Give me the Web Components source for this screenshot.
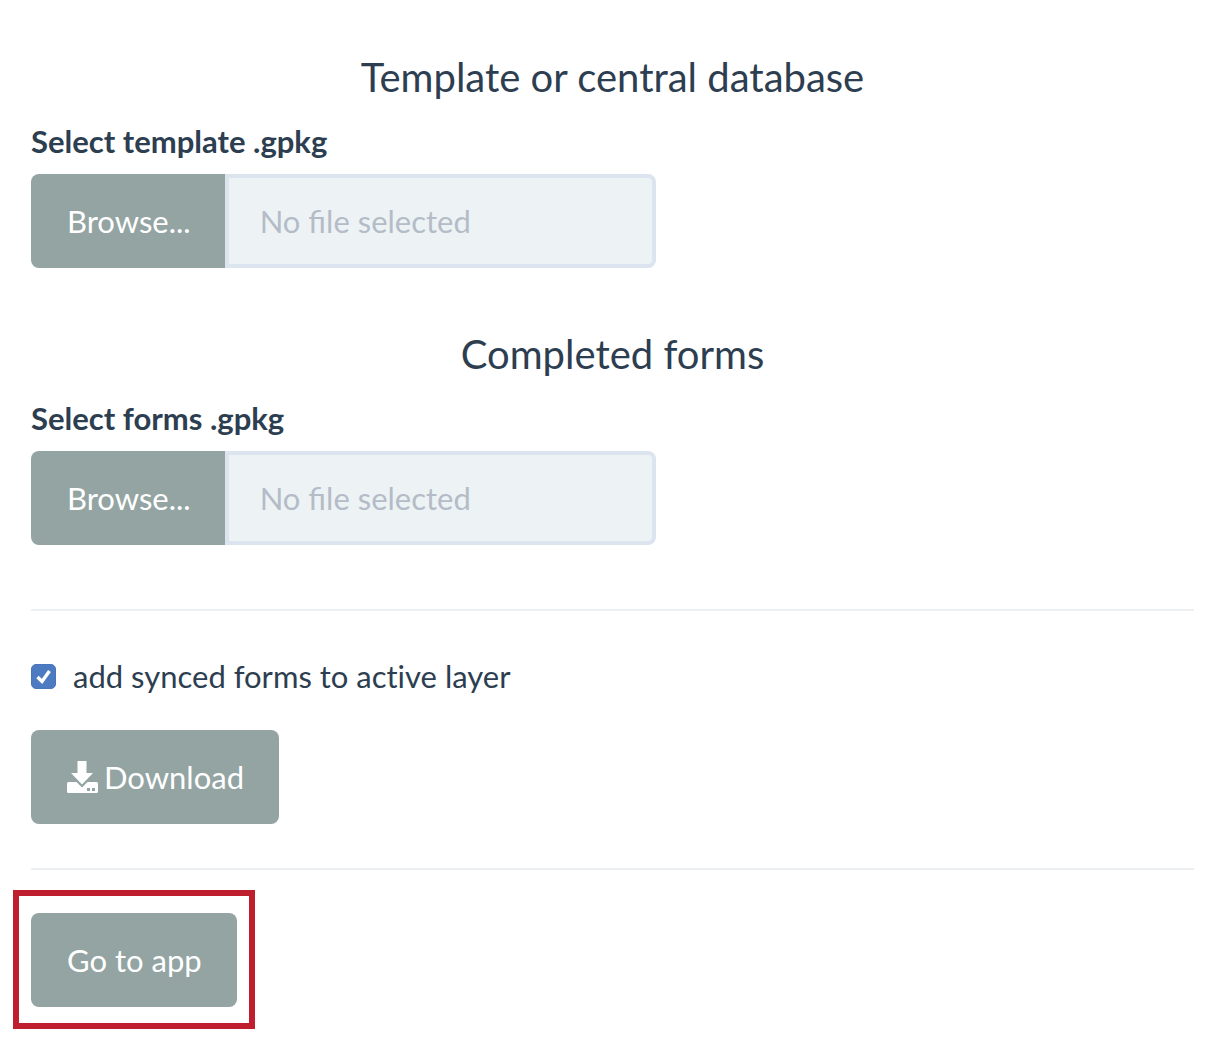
<!DOCTYPE html>
<html lang="en">
<head>
<meta charset="utf-8">
<meta name="viewport" content="width=device-width, initial-scale=1">
<title>Sync forms</title>
<style>
  body { margin: 0; background: #fff; color: #2c3e50; font: 31px/42px Lato, "Liberation Sans", sans-serif; }
</style>
</head>
<body>
<sync-page>
  <form-section heading="Template or central database">
    <file-picker label="Select template .gpkg"></file-picker>
  </form-section>
  <form-section heading="Completed forms">
    <file-picker label="Select forms .gpkg"></file-picker>
  </form-section>
  <sync-options slot="options">
    <check-option>add synced forms to active layer</check-option>
    <action-button><download-icon></download-icon> Download</action-button>
  </sync-options>
  <highlight-frame slot="footer"><action-button>Go to app</action-button></highlight-frame>
</sync-page>
<script>
  const define = (name, markup, setup) => customElements.define(name, class extends HTMLElement {
    constructor() {
      super();
      this.attachShadow({ mode: 'open' }).innerHTML = markup;
    }
    connectedCallback() {
      if (setup) setup(this, this.shadowRoot);
    }
  });

  define('sync-page', `
    <style>
      :host { display: block; padding: 56px 31px 12px; }
      .sections { display: flex; flex-direction: column; gap: 65px; margin-bottom: 64px; }
      hr { border: 0; border-top: 2px solid #ecf0f3; margin: 0; }
      slot[name=options] { display: block; padding: 44px 0; }
      slot[name=footer] { display: block; padding-top: 20px; }
    </style>
    <main>
      <div class="sections"><slot></slot></div>
      <hr>
      <slot name="options"></slot>
      <hr>
      <slot name="footer"></slot>
    </main>`);

  define('form-section', `
    <style>
      :host { display: block; }
      h2 { margin: 0 0 22px; font-size: 40px; line-height: 42px; font-weight: 400; text-align: center; }
    </style>
    <section><h2></h2><slot></slot></section>`,
    (host, root) => { root.querySelector('h2').textContent = host.getAttribute('heading'); });

  define('file-picker', `
    <style>
      :host { display: block; }
      label { display: block; font-weight: 700; margin-bottom: 12px; }
      .group { display: flex; width: 625px; max-width: 100%; height: 94px; }
      button { flex: none; border: 0; border-radius: 8px 0 0 8px; padding: 0 34px 0 36px; background: #93a4a3; color: #fff; font: inherit; }
      #name { flex: 1; min-width: 0; box-sizing: border-box; border: 4px solid #dce4ef; border-radius: 0 8px 8px 0; padding: 0 31px; background: #edf3f5; color: #2c3e50; font: inherit; }
      #name::placeholder { color: #b4bcc7; opacity: 1; }
    </style>
    <label for="name"></label>
    <div class="group">
      <button type="button">Browse...</button>
      <input id="name" type="text" placeholder="No file selected" readonly>
      <input id="file" type="file" accept=".gpkg" hidden>
    </div>`,
    (host, root) => {
      const file = root.querySelector('#file');
      root.querySelector('label').textContent = host.getAttribute('label');
      root.querySelector('button').onclick = () => file.click();
      file.onchange = () => { root.querySelector('#name').value = file.files.length ? file.files[0].name : ''; };
    });

  define('sync-options', `
    <style>:host { display: flex; flex-direction: column; align-items: flex-start; gap: 33px; }</style>
    <slot></slot>`);

  define('check-option', `
    <style>
      :host { display: block; font-variant-ligatures: none; }
      label { display: flex; align-items: center; gap: 17px; }
      .box { display: grid; width: 25px; height: 25px; }
      input { grid-area: 1 / 1; appearance: none; width: 25px; height: 25px; margin: 0; border: 1px solid #8c9bab; border-radius: 5px; background: #fff; }
      input:checked { border-color: #4876bd; background: #4d7bc1; }
      svg { grid-area: 1 / 1; visibility: hidden; pointer-events: none; }
      input:checked + svg { visibility: visible; }
    </style>
    <label>
      <span class="box"><input type="checkbox" checked>
        <svg width="25" height="25" viewBox="0 0 25 25" aria-hidden="true"><path d="M6.500 13 11 17.500 18.500 7" fill="none" stroke="#fff" stroke-width="3.400"/></svg>
      </span>
      <span><slot></slot></span>
    </label>`);

  define('action-button', `
    <style>
      :host { display: inline-block; vertical-align: top; }
      button { display: flex; align-items: center; gap: 6px; height: 94px; border: 0; border-radius: 8px; padding: 0 35px 0 36px; background: #93a4a3; color: #fff; font: inherit; white-space: nowrap; }
    </style>
    <button type="button"><slot></slot></button>`);

  define('download-icon', `
    <style>
      :host { display: block; width: 31px; height: 32px; }
      svg { display: block; }
    </style>
    <svg width="31" height="32" viewBox="0 0 31 32" fill="#fff" aria-hidden="true">
      <path d="M10.500 0H19.500V12H26L15 23.500 4 12H10.500Z"/>
      <path fill-rule="evenodd" d="M1.500 21H9.500L15 26.500 20.500 21H29.500Q31 21 31 22.500V30.500Q31 32 29.500 32H1.500Q0 32 0 30.500V22.500Q0 21 1.500 21ZM20 27V30H23V27ZM25 27V30H28V27Z"/>
    </svg>`);

  define('highlight-frame', `
    <style>
      :host { display: block; box-sizing: border-box; width: fit-content; margin-left: -18px; border: 6px solid #bf1e2e; padding: 17px 12px 16px; }
    </style>
    <slot></slot>`);
</script>
</body>
</html>
